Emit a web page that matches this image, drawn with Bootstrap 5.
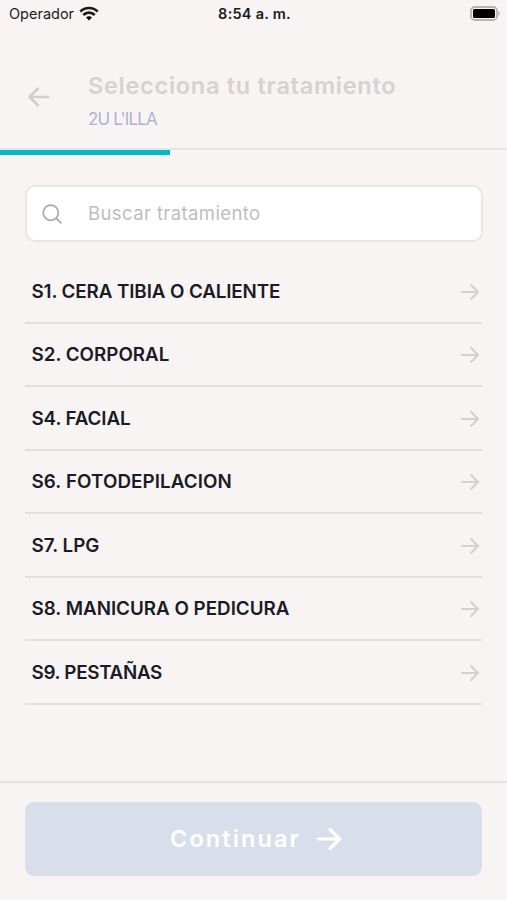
<!DOCTYPE html>
<html lang="es">
<head>
<meta charset="utf-8">
<meta name="viewport" content="width=device-width, initial-scale=1">
<title>Selecciona tu tratamiento</title>
<link href="https://cdn.jsdelivr.net/npm/bootstrap@5.3.0/dist/css/bootstrap.min.css" rel="stylesheet">
<style>
  body { background: #f8f4f3; font-family: Inter, "Liberation Sans", sans-serif; color: #1b1a26; }
  svg { display: block; flex: none; fill: none; stroke: currentColor; stroke-linecap: round; stroke-linejoin: round; }
  .status { height: 28px; padding: 0 7px 0 9px; font-size: 14.5px; line-height: 28px; color: #1d1b1b; }
  .status .side { flex: 1 1 0; }
  .status .clock { font-weight: 600; letter-spacing: .25px; }
  .wifi { stroke-linecap: butt; margin-left: 5px; margin-bottom: 2px; }
  .battery { margin-bottom: 2px; }
  .top { height: 120px; padding: 44px 28px 0 27px; }
  .back { color: #d3cfce; margin-top: 13px; }
  .heading { margin-left: 38px; }
  .heading h1 { font-size: 23.5px; line-height: 28px; font-weight: 600; letter-spacing: .72px; color: #d5d2d1; }
  .heading p { font-size: 17px; line-height: 22px; margin-top: 8px; letter-spacing: -.85px; color: #aeb2d3; }
  .steps { height: 7px; border-radius: 0; background: linear-gradient(#e7e4e3 2px, transparent 2px); }
  .steps .progress-bar { background: #00b9c4; height: 5px; margin-top: 2px; }
  .search { margin: 30px 24.5px 0 25px; height: 57px; border: 2px solid #e9e6e4; border-radius: 10px; padding: 0 14px; }
  .search svg { color: #a9a9a9; }
  .search .hint { margin-left: 25px; font-size: 18.5px; letter-spacing: .4px; color: #bdbdc0; }
  .treatments { margin: 18px 25px 0; }
  .treatments .entry { height: 63.5px; padding: 2px 2px 0 6.5px; background: none; color: inherit; border: 0; border-bottom: 2px solid #e3dfde; border-radius: 0; font-size: 18.8px; font-weight: 600; }
  .treatments .entry:last-child { border-bottom: 2px solid #e3dfde; }
  .entry svg { color: #d3d0cf; }
  .tight { letter-spacing: -.1px; }
  .tighter { letter-spacing: -.3px; }
  .loose { letter-spacing: .1px; }
  .bottom { height: 119px; border-top: 2px solid #e6e2e1; padding: 19px 25px 0; }
  .go { height: 74px; border: 0; border-radius: 9px; background: #d8dfea; color: #fff; font-size: 23.5px; font-weight: 600; letter-spacing: 2.1px; gap: 15px; padding-left: 17px; }
  .go:disabled { background: #d8dfea; color: #fff; opacity: 1; }
</style>
</head>
<body>
<div class="vh-100 d-flex flex-column overflow-hidden">
  <div class="status d-flex align-items-center">
    <div class="side d-flex align-items-center">
      <span>Operador</span>
      <svg class="wifi" width="20" height="15" viewBox="0 0 20 15" stroke="#000" stroke-width="2.7"><path d="M1.3 5.6a12.3 12.3 0 0 1 17.4 0M4.3 9a8 8 0 0 1 11.4 0"/><path d="M7.1 11.5a4 4 0 0 1 5.8 0L10 14.5z" fill="#000" stroke="none"/></svg>
    </div>
    <span class="clock">8:54 a. m.</span>
    <div class="side d-flex justify-content-end">
      <svg class="battery" width="30" height="15" viewBox="0 0 30 15"><rect x="1" y="1" width="26" height="13" rx="3.8" stroke="#b8b5b4" stroke-width="1.8"/><rect x="3" y="3" width="22" height="9" rx="1.6" fill="#000" stroke="none"/><path d="M28.4 5.2v4.6q1.6-.8 1.6-2.3t-1.6-2.3z" fill="#b3b0af" stroke="none"/></svg>
    </div>
  </div>

  <header class="top d-flex align-items-start">
    <svg class="back" width="23" height="24" viewBox="0 0 23 24" stroke-width="2.5"><path d="M21 12H2.5M11 3.5L2.5 12l8.5 8.5"/></svg>
    <div class="heading text-nowrap">
      <h1 class="mb-0">Selecciona tu tratamiento</h1>
      <p class="mb-0">2U L'ILLA</p>
    </div>
  </header>
  <div class="progress steps"><div class="progress-bar" style="width:33.5%"></div></div>

  <main class="flex-grow-1">
    <div class="search bg-white d-flex align-items-center">
      <svg width="22" height="22" viewBox="0 0 22 22" stroke-width="1.7"><circle cx="9.8" cy="9.8" r="7.6"/><path d="M15.4 15.4l4.5 4.5"/></svg>
      <span class="hint">Buscar tratamiento</span>
    </div>
    <div class="treatments list-group list-group-flush">
      <a class="entry list-group-item d-flex align-items-center justify-content-between"><span class="tight">S1. CERA TIBIA O CALIENTE</span><svg width="20" height="18" viewBox="0 0 20 18" stroke-width="2.1"><path d="M2 9h16M11 2l7 7-7 7"/></svg></a>
      <a class="entry list-group-item d-flex align-items-center justify-content-between"><span>S2. CORPORAL</span><svg width="20" height="18" viewBox="0 0 20 18" stroke-width="2.1"><path d="M2 9h16M11 2l7 7-7 7"/></svg></a>
      <a class="entry list-group-item d-flex align-items-center justify-content-between"><span class="tight">S4. FACIAL</span><svg width="20" height="18" viewBox="0 0 20 18" stroke-width="2.1"><path d="M2 9h16M11 2l7 7-7 7"/></svg></a>
      <a class="entry list-group-item d-flex align-items-center justify-content-between"><span class="loose">S6. FOTODEPILACION</span><svg width="20" height="18" viewBox="0 0 20 18" stroke-width="2.1"><path d="M2 9h16M11 2l7 7-7 7"/></svg></a>
      <a class="entry list-group-item d-flex align-items-center justify-content-between"><span>S7. LPG</span><svg width="20" height="18" viewBox="0 0 20 18" stroke-width="2.1"><path d="M2 9h16M11 2l7 7-7 7"/></svg></a>
      <a class="entry list-group-item d-flex align-items-center justify-content-between"><span>S8. MANICURA O PEDICURA</span><svg width="20" height="18" viewBox="0 0 20 18" stroke-width="2.1"><path d="M2 9h16M11 2l7 7-7 7"/></svg></a>
      <a class="entry list-group-item d-flex align-items-center justify-content-between"><span class="tighter">S9. PESTAÑAS</span><svg width="20" height="18" viewBox="0 0 20 18" stroke-width="2.1"><path d="M2 9h16M11 2l7 7-7 7"/></svg></a>
    </div>
  </main>

  <footer class="bottom">
    <button class="go btn w-100 d-flex align-items-center justify-content-center" disabled>
      <span>Continuar</span>
      <svg width="26" height="24" viewBox="0 0 26 24" stroke-width="3.2"><path d="M2 12h22M14 2.5l9.7 9.5-9.7 9.5"/></svg>
    </button>
  </footer>
</div>
</body>
</html>
